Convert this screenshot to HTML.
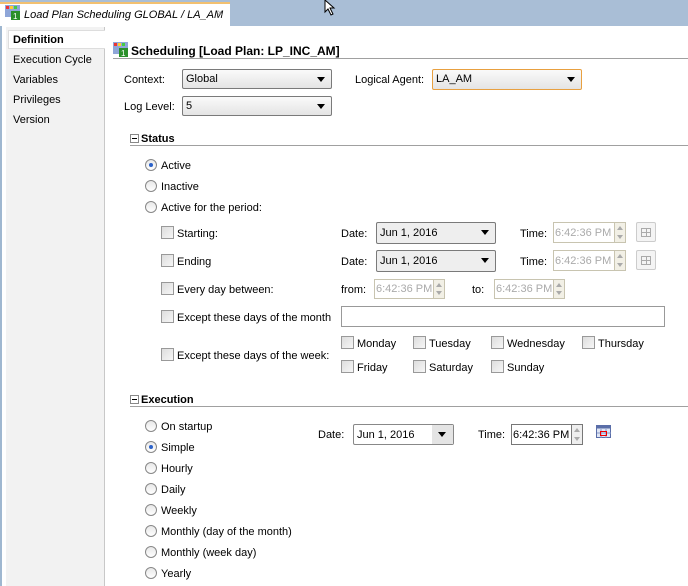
<!DOCTYPE html><html><head><style>
*{margin:0;padding:0;box-sizing:border-box}
body{width:688px;height:586px;overflow:hidden;background:#fff;font:11px "Liberation Sans",sans-serif;color:#000;position:relative}
.a{position:absolute;white-space:nowrap;line-height:14px}
.t{position:absolute;white-space:nowrap;line-height:14px;transform:translateY(-6px)}
.combo{position:absolute;border:1px solid #7a7a7a;border-radius:2px;background:linear-gradient(#fafafa,#e4e4e4);padding-left:3px;line-height:19px}
.combo:after{content:"";position:absolute;right:6px;top:7px;border:4px solid transparent;border-top:5px solid #000;border-bottom:0}
.radio{position:absolute;width:12px;height:12px;border:1px solid #888;border-radius:50%;background:linear-gradient(#e8e8e8,#fff)}
.radio.on:after{content:"";position:absolute;left:3px;top:3px;width:4px;height:4px;border-radius:50%;background:#2b62c9}
.cb{position:absolute;width:13px;height:13px;border:1px solid #999;background:linear-gradient(135deg,#ddd,#f6f6f6)}
.tf{position:absolute;border:1px solid #c8c4b0;color:#aaa;padding-left:1px;line-height:20px;background:#fff}
.sp{position:absolute;width:12px;border:1px solid #c8c4b0;background:#f2f0e6}
.sp:before{content:"";position:absolute;left:2px;top:3px;border:3px solid transparent;border-bottom:4px solid #aaa;border-top:0}
.sp:after{content:"";position:absolute;left:2px;bottom:3px;border:3px solid transparent;border-top:4px solid #aaa;border-bottom:0}
.hl{position:absolute;height:1px;background:#a0a0a0}
.mbox{position:absolute;width:9px;height:9px;border:1px solid #888;background:#fff}
.mbox:after{content:"";position:absolute;left:1px;top:3px;width:5px;height:1px;background:#000}
.b{font-weight:bold}
</style></head><body>
<div class="a" style="left:0;top:0;width:688px;height:26px;background:#a9bed6"></div>
<div class="a" style="left:0;top:2px;width:230px;height:24px;background:#fff;border-top:2px solid #f2c070"></div>
<svg class="a" style="left:5px;top:5px" width="16" height="16"><rect x="0" y="0" width="15" height="12" fill="#8fa6d8"/><rect x="1" y="1" width="3" height="3" fill="#e33"/><rect x="5" y="1" width="3" height="3" fill="#fc3"/><rect x="9" y="1" width="3" height="3" fill="#4c4"/><rect x="6" y="6" width="9" height="9" fill="#2a8f2a"/><text x="8" y="14" font-size="8" fill="#fff" font-family="Liberation Sans">1</text></svg>
<div class="t" style="left:24px;top:14px;font-style:italic">Load Plan Scheduling GLOBAL / LA_AM</div>
<div class="t" style="left:217px;top:13px;color:#aaa;font-size:10px">×</div>
<svg class="a" style="left:324px;top:0" width="14" height="16"><path d="M1 0 L1 12 L4 9 L7 15 L9 14 L6 8 L10 8 Z" fill="#fff" stroke="#000"/></svg>
<div class="a" style="left:0;top:26px;width:2px;height:560px;background:#9fb7d0"></div>
<div class="a" style="left:6px;top:27px;width:99px;height:559px;background:#f2f2f2;border-right:1px solid #c8c8c8"></div>
<div class="a" style="left:8px;top:30px;width:97px;height:19px;background:#fff;border:1px solid #ddd;border-right:0"></div>
<div class="t b" style="left:13px;top:39px">Definition</div>
<div class="t" style="left:13px;top:59px">Execution Cycle</div>
<div class="t" style="left:13px;top:79px">Variables</div>
<div class="t" style="left:13px;top:99px">Privileges</div>
<div class="t" style="left:13px;top:119px">Version</div>
<svg class="a" style="left:113px;top:42px" width="17" height="16"><rect x="0" y="0" width="15" height="12" fill="#8fa6d8"/><rect x="1" y="1" width="3" height="3" fill="#e33"/><rect x="5" y="1" width="3" height="3" fill="#fc3"/><rect x="9" y="1" width="3" height="3" fill="#4c4"/><rect x="6" y="6" width="9" height="9" fill="#2a8f2a"/><text x="8" y="14" font-size="8" fill="#fff" font-family="Liberation Sans">1</text></svg>
<div class="t b" style="left:131px;top:50px;font-size:12px">Scheduling [Load Plan: LP_INC_AM]</div>
<div class="hl" style="left:113px;top:58px;width:575px"></div>
<div class="t" style="left:124px;top:79px">Context:</div>
<div class="combo" style="left:182px;top:69px;width:150px;height:20px">Global</div>
<div class="t" style="left:355px;top:79px">Logical Agent:</div>
<div class="combo" style="left:432px;top:69px;width:150px;height:21px;border:1px solid #e8a040">LA_AM</div>
<div class="t" style="left:124px;top:106px">Log Level:</div>
<div class="combo" style="left:182px;top:96px;width:150px;height:20px">5</div>
<div class="mbox" style="left:130px;top:134px"></div>
<div class="t b" style="left:141px;top:138px">Status</div>
<div class="hl" style="left:130px;top:145px;width:558px"></div>
<div class="radio on" style="left:145px;top:159px"></div><div class="t" style="left:161px;top:165px">Active</div>
<div class="radio" style="left:145px;top:180px"></div><div class="t" style="left:161px;top:186px">Inactive</div>
<div class="radio" style="left:145px;top:201px"></div><div class="t" style="left:161px;top:207px">Active for the period:</div>
<div class="cb" style="left:161px;top:226px"></div><div class="t" style="left:177px;top:233px">Starting:</div>
<div class="cb" style="left:161px;top:254px"></div><div class="t" style="left:177px;top:261px">Ending</div>
<div class="cb" style="left:161px;top:282px"></div><div class="t" style="left:177px;top:289px">Every day between:</div>
<div class="cb" style="left:161px;top:310px"></div><div class="t" style="left:177px;top:317px">Except these days of the month</div>
<div class="cb" style="left:161px;top:348px"></div><div class="t" style="left:177px;top:355px">Except these days of the week:</div>
<div class="t" style="left:341px;top:233px">Date:</div>
<div class="combo" style="left:376px;top:222px;width:120px;height:22px;line-height:21px;background:#eee">Jun 1, 2016</div>
<div class="t" style="left:520px;top:233px">Time:</div>
<div class="tf" style="left:553px;top:222px;width:62px;height:21px">6:42:36 PM</div><div class="sp" style="left:614px;top:222px;height:21px"></div>
<div class="a" style="left:636px;top:222px;width:20px;height:20px;border:1px solid #ccc;border-radius:2px;background:#f4f4f4"></div><div class="a" style="left:641px;top:228px;width:10px;height:9px;border:1px solid #aaa;background:linear-gradient(#aaa,#aaa) 4px 0/1px 100% no-repeat,linear-gradient(#aaa,#aaa) 0 3px/100% 1px no-repeat"></div>
<div class="t" style="left:341px;top:261px">Date:</div>
<div class="combo" style="left:376px;top:250px;width:120px;height:22px;line-height:21px;background:#eee">Jun 1, 2016</div>
<div class="t" style="left:520px;top:261px">Time:</div>
<div class="tf" style="left:553px;top:250px;width:62px;height:21px">6:42:36 PM</div><div class="sp" style="left:614px;top:250px;height:21px"></div>
<div class="a" style="left:636px;top:250px;width:20px;height:20px;border:1px solid #ccc;border-radius:2px;background:#f4f4f4"></div><div class="a" style="left:641px;top:256px;width:10px;height:9px;border:1px solid #aaa;background:linear-gradient(#aaa,#aaa) 4px 0/1px 100% no-repeat,linear-gradient(#aaa,#aaa) 0 3px/100% 1px no-repeat"></div>
<div class="t" style="left:341px;top:289px">from:</div>
<div class="tf" style="left:374px;top:279px;width:60px;height:20px;line-height:19px">6:42:36 PM</div><div class="sp" style="left:433px;top:279px;height:20px"></div>
<div class="t" style="left:472px;top:289px">to:</div>
<div class="tf" style="left:494px;top:279px;width:60px;height:20px;line-height:19px">6:42:36 PM</div><div class="sp" style="left:553px;top:279px;height:20px"></div>
<div class="a" style="left:341px;top:306px;width:324px;height:21px;border:1px solid #999"></div>
<div class="cb" style="left:341px;top:336px"></div><div class="t" style="left:357px;top:343px">Monday</div>
<div class="cb" style="left:413px;top:336px"></div><div class="t" style="left:429px;top:343px">Tuesday</div>
<div class="cb" style="left:491px;top:336px"></div><div class="t" style="left:507px;top:343px">Wednesday</div>
<div class="cb" style="left:582px;top:336px"></div><div class="t" style="left:598px;top:343px">Thursday</div>
<div class="cb" style="left:341px;top:360px"></div><div class="t" style="left:357px;top:367px">Friday</div>
<div class="cb" style="left:413px;top:360px"></div><div class="t" style="left:429px;top:367px">Saturday</div>
<div class="cb" style="left:491px;top:360px"></div><div class="t" style="left:507px;top:367px">Sunday</div>
<div class="mbox" style="left:130px;top:395px"></div>
<div class="t b" style="left:141px;top:399px">Execution</div>
<div class="hl" style="left:130px;top:406px;width:558px"></div>
<div class="radio" style="left:145px;top:420px"></div><div class="t" style="left:161px;top:426px">On startup</div>
<div class="radio on" style="left:145px;top:441px"></div><div class="t" style="left:161px;top:447px">Simple</div>
<div class="radio" style="left:145px;top:462px"></div><div class="t" style="left:161px;top:468px">Hourly</div>
<div class="radio" style="left:145px;top:483px"></div><div class="t" style="left:161px;top:489px">Daily</div>
<div class="radio" style="left:145px;top:504px"></div><div class="t" style="left:161px;top:510px">Weekly</div>
<div class="radio" style="left:145px;top:525px"></div><div class="t" style="left:161px;top:531px">Monthly (day of the month)</div>
<div class="radio" style="left:145px;top:546px"></div><div class="t" style="left:161px;top:552px">Monthly (week day)</div>
<div class="radio" style="left:145px;top:567px"></div><div class="t" style="left:161px;top:573px">Yearly</div>
<div class="t" style="left:318px;top:434px">Date:</div>
<div class="combo" style="left:353px;top:424px;width:101px;height:21px;line-height:20px;background:#fff;border-color:#888">Jun 1, 2016</div>
<div class="a" style="left:432px;top:425px;width:21px;height:19px;background:#e4e4e4"></div>
<div class="a" style="left:438px;top:432px;border:4px solid transparent;border-top:5px solid #000;border-bottom:0;height:0"></div>
<div class="t" style="left:478px;top:434px">Time:</div>
<div class="tf" style="left:511px;top:424px;width:61px;height:21px;color:#000;border-color:#777">6:42:36 PM</div>
<div class="sp" style="left:571px;top:424px;height:21px;border-color:#777;background:#eee"></div>
<svg class="a" style="left:596px;top:425px" width="16" height="14"><rect x="0.5" y="0.5" width="14" height="12" fill="#dfe6f5" stroke="#5a6ea8"/><rect x="0.5" y="0.5" width="14" height="3" fill="#5a6ea8"/><path d="M5 4V13M10 4V13M1 8H15" stroke="#8898c8"/><rect x="4.5" y="6.5" width="6" height="4" fill="none" stroke="#e00"/></svg>
</body></html>
